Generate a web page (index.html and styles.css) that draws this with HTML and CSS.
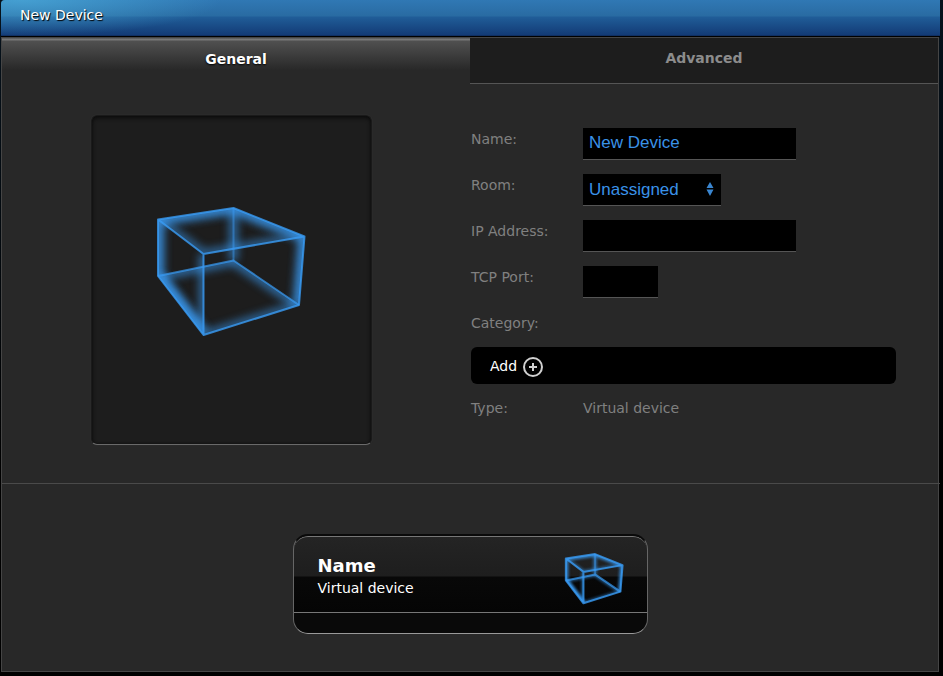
FILE: index.html
```
<!DOCTYPE html>
<html lang="en">
<head>
<meta charset="utf-8">
<title>New Device</title>
<link rel="stylesheet" href="styles.css">
</head>
<body>
<svg class="defs" aria-hidden="true">
  <defs>
    <filter id="soft" filterUnits="userSpaceOnUse" x="-20" y="-20" width="200" height="180"><feGaussianBlur stdDeviation="4"/></filter>
    <filter id="line" filterUnits="userSpaceOnUse" x="-20" y="-20" width="200" height="180"><feGaussianBlur stdDeviation=".7"/></filter>
    <clipPath id="hull"><path d="M7 19.500 82.500 8 153.500 36.500 148 105 52.500 135 7 76Z"/></clipPath>
    <clipPath id="floor"><path d="M7 76 82.500 60.500 148 105 52.500 135Z"/></clipPath>
    <clipPath id="lid"><path d="M7 19.500 82.500 8 153.500 36.500 52.500 54Z"/></clipPath>
    <clipPath id="side"><path d="M7 19.500 52.500 54V135L7 76Z"/></clipPath>
    <symbol id="cube" viewBox="0 0 162 142">
      <g clip-path="url(#hull)" fill="none" stroke="#3a9cf5">
        <path class="glow" opacity=".85" stroke-width="12" d="M148 105 153.500 36.500 82.500 8 7 19.500V76L52.500 135"/>
        <path class="glow" opacity=".6" stroke-width="8" d="M52.500 135 148 105"/>
        <path class="glow" opacity=".6" stroke-width="9" d="M82.500 8V60.500"/>
      </g>
      <g clip-path="url(#floor)" fill="none" stroke="#3a9cf5"><path class="glow" opacity=".6" stroke-width="10" d="M7 76 82.500 60.500 148 105"/></g>
      <g clip-path="url(#lid)" fill="none" stroke="#3a9cf5"><path class="glow" opacity=".55" stroke-width="9" d="M7 19.500 52.500 54 153.500 36.500"/></g>
      <g clip-path="url(#side)" fill="none" stroke="#3a9cf5"><path class="glow" opacity=".6" stroke-width="9" d="M52.500 54V135L7 76"/></g>
      <g class="edges">
        <path opacity=".7" d="M7 76 82.500 60.500 148 105"/>
        <path opacity=".45" d="M82.500 8V60.500"/>
        <path opacity=".8" d="M7 19.500 82.500 8 153.500 36.500 148 105 52.500 135 7 76ZM7 19.500 52.500 54 153.500 36.500M52.500 54V135"/>
      </g>
    </symbol>
  </defs>
</svg>
<div class="window">
  <header class="titlebar"><h1>New Device</h1></header>
  <main class="panel">
    <nav class="tabs">
      <button type="button" class="tab active">General</button>
      <button type="button" class="tab">Advanced</button>
    </nav>
    <section class="general">
      <div class="preview">
        <div class="frame"><svg class="cube-large" role="img" aria-label="Device picture"><use href="#cube"/></svg></div>
      </div>
      <form class="form">
        <div class="row"><label for="name">Name:</label><input id="name" type="text" value="New Device"></div>
        <div class="row"><label for="room">Room:</label>
          <span class="select"><select id="room"><option>Unassigned</option></select>
            <svg viewBox="0 0 8 14" aria-hidden="true"><path d="M4 0 7.500 6H.5ZM.5 7.500h7L4 14Z"/></svg></span>
        </div>
        <div class="row"><label for="ip">IP Address:</label><input id="ip" type="text"></div>
        <div class="row"><label for="port">TCP Port:</label><input id="port" class="short" type="text"></div>
        <div class="caption">Category:</div>
        <div class="categories">
          <button type="button" class="add">Add
            <svg viewBox="0 0 20 20" aria-hidden="true"><circle cx="10" cy="10" r="9"/><path d="M10 6v8M6 10h8"/></svg>
          </button>
        </div>
        <div class="row"><span class="key">Type:</span><span class="value">Virtual device</span></div>
      </form>
    </section>
    <section class="summary">
      <article class="card">
        <div class="card-main">
          <div class="card-text"><h2>Name</h2><p>Virtual device</p></div>
          <svg class="cube-small" aria-hidden="true"><use href="#cube"/></svg>
        </div>
        <div class="card-foot"></div>
      </article>
    </section>
  </main>
</div>
</body>
</html>
```
FILE: styles.css
```
* { box-sizing: border-box; }
body {
  margin: 0;
  min-height: 100vh;
  background: linear-gradient(#06121c, #000 70%);
  color: #808080;
  font: 14px/18px "DejaVu Sans", sans-serif;
}
h1, h2, p { margin: 0; }
button, input, select { font: inherit; border: 0; border-radius: 0; }
.defs { position: absolute; width: 0; height: 0; }
.window { margin: 0 3px 0 1px; }
.titlebar {
  height: 37px;
  padding: 6px 19px;
  border-bottom: 1px solid #000;
  border-top-left-radius: 4px;
  background:
    radial-gradient(ellipse 200px 36px at 20px 0, rgba(80, 180, 225, .65), transparent),
    linear-gradient(#3078b4, #296ba2 16px, #205d98 17px, #133b76 35px, #0c2450 36px);
}
h1 { font-size: 14px; line-height: 18px; font-weight: 400; color: #fff; text-shadow: 1px 1px 1px #000; }
.panel { margin-right: 1px; border: 1px solid #454545; background: #282828; }
.tabs { display: grid; grid-template-columns: 1fr 1fr; }
.tab {
  height: 46px;
  padding: 0 0 6px;
  border-bottom: 1px solid #555;
  background: #1d1d1d;
  color: #8c8c8c;
  font-weight: 700;
}
.tab.active {
  padding: 0 0 4px;
  border-bottom: 0;
  background: linear-gradient(#484848, #777 1px, #777 2px, #505050 3px, #282828 32px);
  color: #fff;
  text-shadow: 0 1px 2px #000;
}
.general { display: grid; grid-template-columns: 1fr 1fr; padding: 31px 0 38px; border-bottom: 1px solid #4a4a4a; margin-right: -2px; }
.preview { display: flex; justify-content: center; padding-right: 10px; }
.frame {
  display: flex;
  align-items: center;
  justify-content: center;
  width: 281px;
  height: 330px;
  padding-bottom: 18px;
  border: 1px solid #1a1a1a;
  border-bottom-color: #6a6a6a;
  border-radius: 6px;
  background: #1d1d1d;
  box-shadow: inset 0 2px 4px #0c0c0c, inset 0 0 2px #101010, 0 0 1px #444;
}
.cube-large { width: 162px; height: 142px; }
.glow { filter: url(#soft); }
.edges { fill: none; stroke: #3a9cf5; stroke-width: 2; stroke-linejoin: round; filter: url(#line); }
.cube-small { stroke-width: 1; }
.edges path { vector-effect: non-scaling-stroke; }
.form { padding: 13px 44px 0 0; }
.row { display: grid; grid-template-columns: 112px 1fr; align-items: start; margin-bottom: 14px; }
.row label { padding-top: 2px; }
.row input, .select select {
  height: 32px;
  padding: 0 6px 2px;
  border-bottom: 1px solid #555;
  background: #000;
  color: #3a92e8;
  font: 17px/20px "Liberation Sans", sans-serif;
}
.row input { width: 213px; }
.row input.short { width: 75px; }
.select { position: relative; width: 138px; height: 32px; }
.select select { width: 100%; padding-bottom: 0; appearance: none; }
.select svg { position: absolute; right: 7px; top: 8px; width: 8px; height: 14px; fill: #3a86d0; pointer-events: none; }
.caption { padding-top: 2px; margin-bottom: 15px; }
.categories { padding: 8px 19px; margin-bottom: 15px; border-radius: 6px; background: #000; }
.add { display: flex; align-items: center; gap: 6px; height: 21px; padding: 0; background: none; color: #fff; }
.add svg { width: 20px; height: 20px; fill: none; stroke: #d0d0d0; stroke-width: 2; margin-top: 2px; }
.row:last-child { margin: 0; }
.summary { display: flex; justify-content: center; padding: 50px 0 37px; }
.card {
  width: 355px;
  border: 1px solid #666;
  border-top: 2px solid #0a0a0a;
  border-bottom-color: #999;
  border-radius: 15px;
  background: #090909;
  overflow: hidden;
}
.card-main {
  display: flex;
  justify-content: space-between;
  height: 77px;
  padding: 14px 21px 0 24px;
  border-top: 1px solid #777;
  border-bottom: 1px solid #777;
  border-radius: 14px 14px 0 0;
  background: linear-gradient(#242424, #1e1e1e 39px, #080808 40px, #050505);
}
.card-text { padding-top: 4px; }
.card h2 { font-size: 18px; line-height: 22px; color: #fff; }
.card p { color: #fff; padding-top: 2px; }
.cube-small { width: 63px; height: 55px; }
.card-foot { height: 20px; }
```
